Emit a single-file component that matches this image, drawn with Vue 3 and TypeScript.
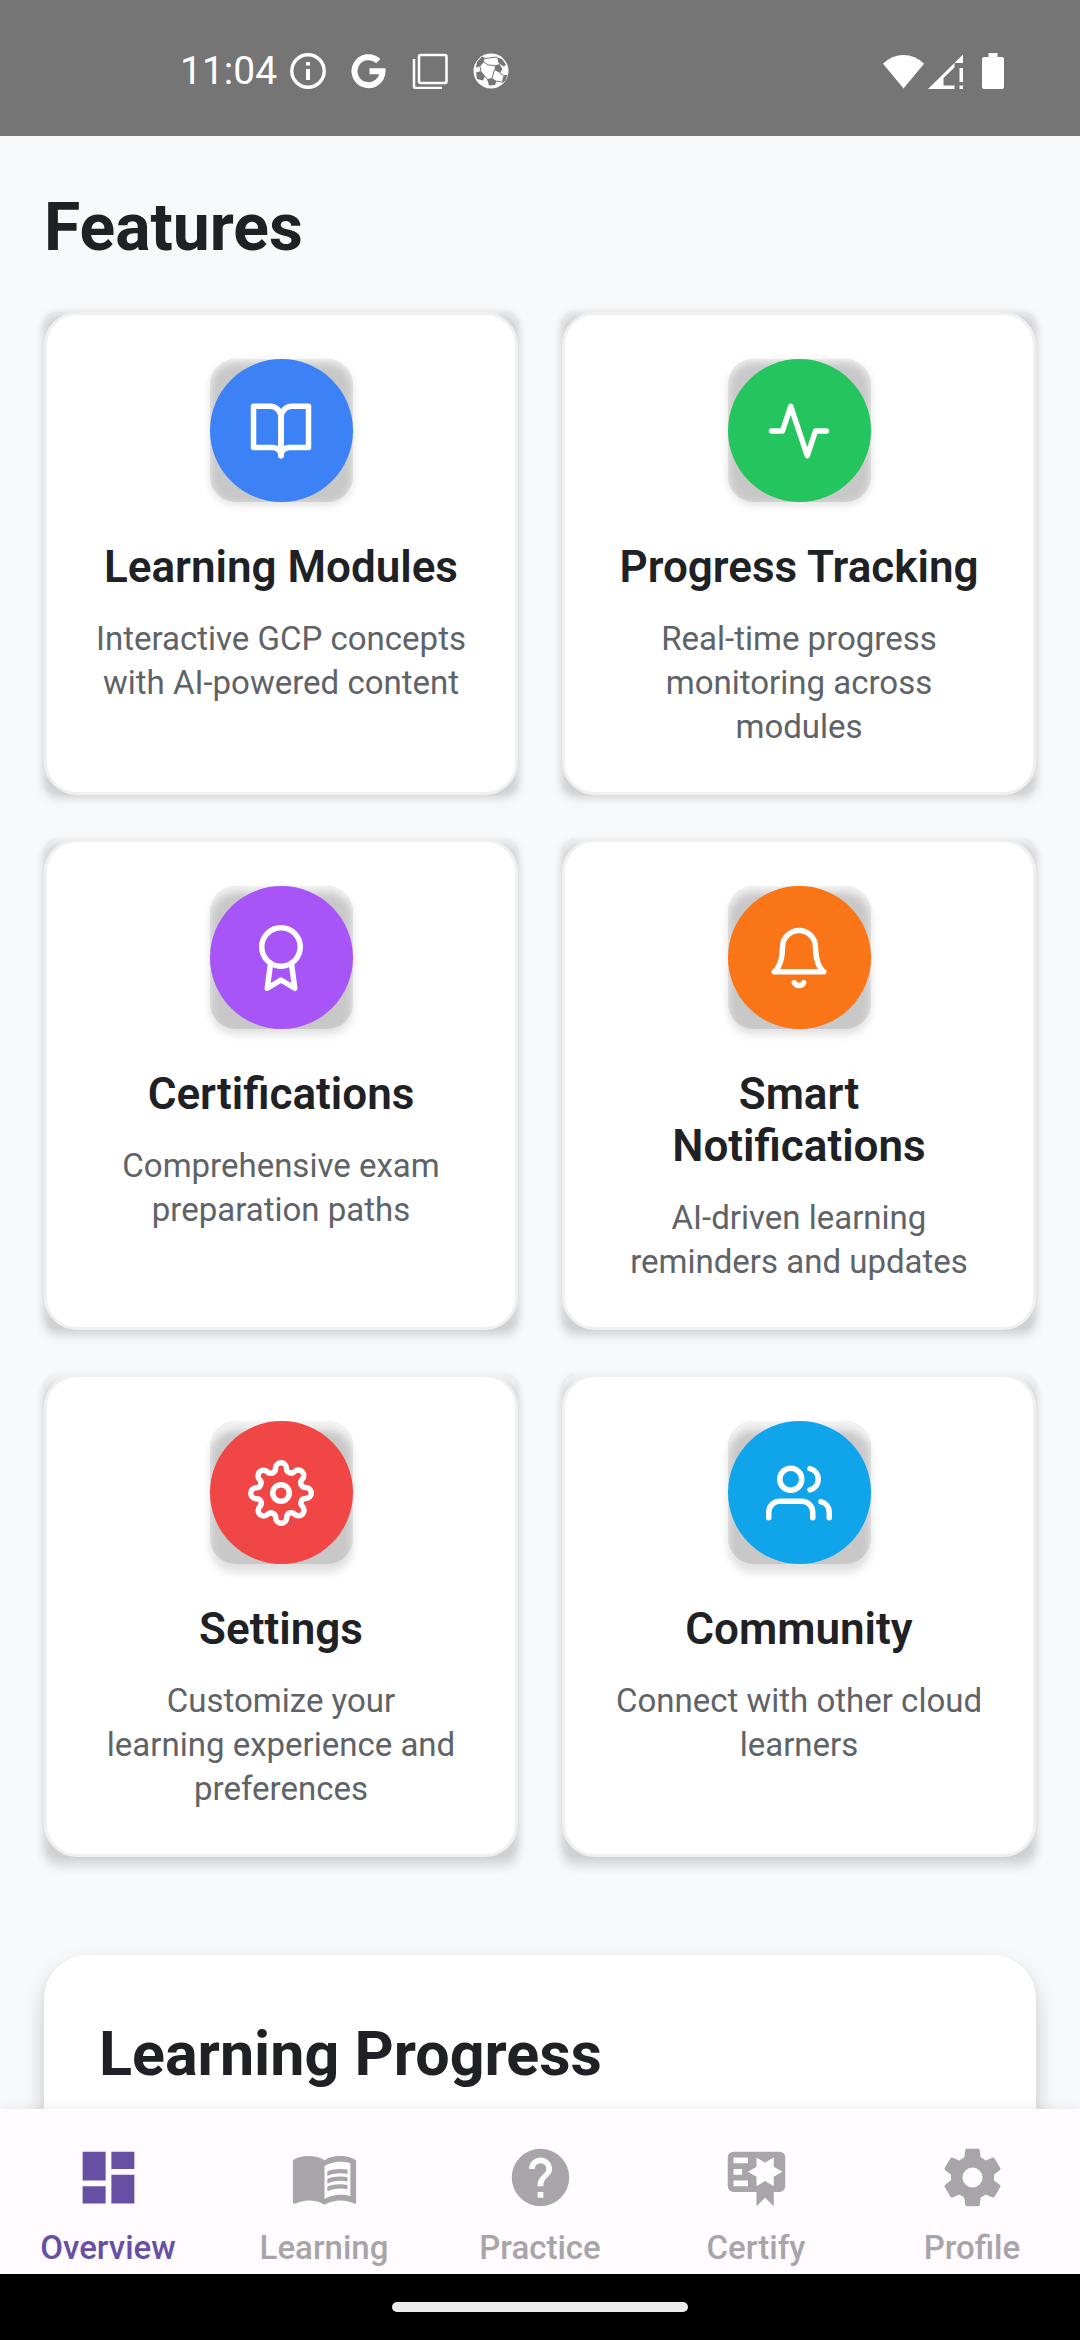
<script setup lang="ts">
interface Feature {
  title: string
  text: string
  color: string
  paths: string[]
  circle?: { cx: number; cy: number; r: number }
}

interface Tab {
  label: string
  path: string
}

const features: Feature[] = [
  {
    title: 'Learning Modules',
    text: 'Interactive GCP concepts with AI-powered content',
    color: '#3c82f6',
    paths: [
      'M2 3h6a4 4 0 0 1 4 4v14a3 3 0 0 0-3-3H2z',
      'M22 3h-6a4 4 0 0 0-4 4v14a3 3 0 0 1 3-3h7z',
    ],
  },
  {
    title: 'Progress Tracking',
    text: 'Real-time progress monitoring across modules',
    color: '#24c55f',
    paths: ['M22 12h-4l-3 9L9 3l-3 9H2'],
  },
  {
    title: 'Certifications',
    text: 'Comprehensive exam preparation paths',
    color: '#a855f7',
    paths: ['M8.21 13.89L7 23l5-3 5 3-1.21-9.12'],
    circle: { cx: 12, cy: 8, r: 7 },
  },
  {
    title: 'Smart Notifications',
    text: 'AI-driven learning reminders and updates',
    color: '#f97518',
    paths: [
      'M6 8a6 6 0 0 1 12 0c0 7 3 9 3 9H3s3-2 3-9',
      'M10.3 21a1.94 1.94 0 0 0 3.4 0',
    ],
  },
  {
    title: 'Settings',
    text: 'Customize your\nlearning experience and preferences',
    color: '#f04646',
    paths: [
      'M19.4 15a1.65 1.65 0 0 0 .33 1.82l.06.06a2 2 0 0 1 0 2.83 2 2 0 0 1-2.83 0l-.06-.06a1.65 1.65 0 0 0-1.82-.33 1.65 1.65 0 0 0-1 1.51V21a2 2 0 0 1-2 2 2 2 0 0 1-2-2v-.09A1.65 1.65 0 0 0 9 19.4a1.65 1.65 0 0 0-1.82.33l-.06.06a2 2 0 0 1-2.83 0 2 2 0 0 1 0-2.83l.06-.06a1.65 1.65 0 0 0 .33-1.82 1.65 1.65 0 0 0-1.51-1H3a2 2 0 0 1-2-2 2 2 0 0 1 2-2h.09A1.65 1.65 0 0 0 4.6 9a1.65 1.65 0 0 0-.33-1.82l-.06-.06a2 2 0 0 1 0-2.83 2 2 0 0 1 2.83 0l.06.06a1.65 1.65 0 0 0 1.82.33H9a1.65 1.65 0 0 0 1-1.51V3a2 2 0 0 1 2-2 2 2 0 0 1 2 2v.09a1.65 1.65 0 0 0 1 1.51 1.65 1.65 0 0 0 1.82-.33l.06-.06a2 2 0 0 1 2.83 0 2 2 0 0 1 0 2.83l-.06.06a1.65 1.65 0 0 0-.33 1.82V9a1.65 1.65 0 0 0 1.51 1H21a2 2 0 0 1 2 2 2 2 0 0 1-2 2h-.09a1.65 1.65 0 0 0-1.51 1z',
    ],
    circle: { cx: 12, cy: 12, r: 3 },
  },
  {
    title: 'Community',
    text: 'Connect with other cloud learners',
    color: '#10a5ea',
    paths: [
      'M17 21v-2a4 4 0 0 0-4-4H5a4 4 0 0 0-4 4v2',
      'M23 21v-2a4 4 0 0 0-3-3.87',
      'M16 3.13a4 4 0 0 1 0 7.75',
    ],
    circle: { cx: 9, cy: 7, r: 4 },
  },
]

const activeTab = 'Overview'

const tabs: Tab[] = [
  {
    label: 'Overview',
    path: 'M13 3v6h8V3M13 21h8V11h-8M3 21h8v-6H3M3 13h8V3H3',
  },
  {
    label: 'Learning',
    path: 'M21 5c-1.11-.35-2.33-.5-3.5-.5-1.95 0-4.05.4-5.5 1.5-1.45-1.1-3.55-1.5-5.5-1.5S2.45 4.9 1 6v14.65c0 .25.25.5.5.5.1 0 .15-.05.25-.05C3.1 20.45 5.05 20 6.5 20c1.95 0 4.05.4 5.5 1.5 1.35-.85 3.8-1.5 5.5-1.5 1.65 0 3.35.3 4.75 1.05.1.05.15.05.25.05.25 0 .5-.25.5-.5V6c-.6-.45-1.25-.75-2-1zm0 13.5c-1.1-.35-2.3-.5-3.5-.5-1.7 0-4.15.65-5.5 1.5V8c1.35-.85 3.8-1.5 5.5-1.5 1.2 0 2.4.15 3.5.5v11.5zM17.5 10.5c.88 0 1.73.09 2.5.26V9.24c-.79-.15-1.64-.24-2.5-.24-1.7 0-3.24.29-4.5.83v1.66c1.13-.64 2.7-.99 4.5-.99zM13 12.49v1.66c1.13-.64 2.7-.99 4.5-.99.88 0 1.73.09 2.5.26V11.9c-.79-.15-1.64-.24-2.5-.24-1.7 0-3.24.3-4.5.83zm4.5 1.84c-1.7 0-3.24.29-4.5.83v1.66c1.13-.64 2.7-.99 4.5-.99.88 0 1.73.09 2.5.26v-1.52c-.79-.16-1.64-.24-2.5-.24z',
  },
  {
    label: 'Practice',
    path: 'M15.07 11.25l-.9.92C13.45 12.89 13 13.5 13 15h-2v-.5c0-1.11.45-2.11 1.17-2.83l1.24-1.26C13.78 10.05 14 9.55 14 9a2 2 0 0 0-4 0H8a4 4 0 0 1 8 0c0 .88-.36 1.67-.93 2.25M13 19h-2v-2h2M12 2a10 10 0 1 0 0 20 10 10 0 0 0 0-20z',
  },
  {
    label: 'Certify',
    path: 'M4 3h16a2 2 0 0 1 2 2v10a2 2 0 0 1-2 2h-2v5l-3-3-3 3v-5H4a2 2 0 0 1-2-2V5a2 2 0 0 1 2-2zM4 5v2h5V5zM4 9v2h3V9zM4 13v2h5v-2zM12 5v3.3L9 10l3 1.7V15l3-1.8 3 1.8v-3.3l3-1.7-3-1.7V5l-3 1.8z',
  },
  {
    label: 'Profile',
    path: 'M12 15.5A3.5 3.5 0 0 1 8.5 12 3.5 3.5 0 0 1 12 8.5a3.5 3.5 0 0 1 3.5 3.5 3.5 3.5 0 0 1-3.5 3.5M19.43 12.97c.04-.32.07-.64.07-.97s-.03-.66-.07-1l2.11-1.63c.19-.15.24-.42.12-.64l-2-3.46c-.12-.22-.39-.31-.61-.22l-2.49 1c-.52-.39-1.06-.73-1.69-.98l-.37-2.65A.506.506 0 0 0 14 2h-4c-.25 0-.46.18-.5.42l-.37 2.65c-.63.25-1.17.59-1.69.98l-2.49-1c-.22-.09-.49 0-.61.22l-2 3.46c-.13.22-.07.49.12.64L4.57 11c-.04.34-.07.67-.07 1s.03.65.07.97l-2.11 1.66c-.19.15-.25.42-.12.64l2 3.46c.12.22.39.3.61.22l2.49-1.01c.52.4 1.06.74 1.69.99l.37 2.65c.04.24.25.42.5.42h4c.25 0 .46-.18.5-.42l.37-2.65c.63-.26 1.17-.59 1.69-.99l2.49 1.01c.22.08.49 0 .61-.22l2-3.46c.12-.22.07-.49-.12-.64z',
  },
]
</script>

<template>
  <div class="screen">
    <header class="status">
      <span class="time">11:04</span>
      <div class="notices">
        <svg viewBox="0 0 36 36" aria-hidden="true">
          <circle cx="18" cy="18" r="16.2" fill="none" stroke="#fff" stroke-width="3.4" />
          <path d="M16 9h4v3.5h-4zM16 16h4v11h-4z" fill="#fff" />
        </svg>
        <svg viewBox="0 0 36 36" aria-hidden="true">
          <path d="M27.3 8.2A14 14 0 1 0 31.5 18.3H18.5" fill="none" stroke="#fff" stroke-width="6" />
        </svg>
        <svg viewBox="0 0 36 36" aria-hidden="true">
          <rect x="7" y="2" width="27.5" height="28" rx="1.5" fill="none" stroke="#fff" stroke-width="2.5" />
          <path d="M2 6v27.5q0 1.5 1.5 1.5H30" fill="none" stroke="#fff" stroke-width="2.5" />
        </svg>
        <svg viewBox="0 0 36 36" aria-hidden="true">
          <circle cx="18" cy="18" r="17.5" fill="#fff" />
          <g fill="#757575">
            <path d="M4 9l5-5.5 2.5 1-.5 4.5-4 4.5-4 1z" />
            <path d="M24 4l5.5 2.5L33 12l-2.5 1.5-5-3.5z" />
            <path d="M22 12.5l4.5-1.5 3 5-2.5 4-5.5-3z" />
            <path d="M3 19.5l5-1.5 4 5-2 4.5-6-1.5z" />
            <path d="M14 26l5-1 4.5 3-1.5 4-6 .5z" />
            <path d="M30.5 22.5l4-1-2 6-4 3z" />
          </g>
          <path d="M11 9l4 3 7 .5M7 13.5l1 4.500M12 23l2 3M21.500 17l-2.500 8M11.500 5.500l4-.500L24 4M27 20l3.500 2.500M23.500 28l5 1" fill="none" stroke="#757575" stroke-width="1" />
        </svg>
      </div>
      <div class="signals">
        <svg class="wifi" viewBox="0 0 42 36" aria-hidden="true">
          <path d="M0 10.5Q9 1.5 21 1.5t21 9L21 36z" fill="#fff" />
        </svg>
        <svg class="cell" viewBox="0 0 36 36" aria-hidden="true">
          <path d="M0 36L35 1.5V10h-8.5v4.5L15.5 25v7.5h11V36zM31.5 15H35v14h-3.5zM31.5 32.5H35V36h-3.5z" fill="#fff" />
        </svg>
        <svg class="battery" viewBox="0 0 22 36" aria-hidden="true">
          <path d="M6.5 0h9v4H20q2 0 2 2v28q0 2-2 2H2q-2 0-2-2V6q0-2 2-2h4.5z" fill="#fff" />
        </svg>
      </div>
    </header>

    <main class="content">
      <h1>Features</h1>
      <section class="grid">
        <div v-for="f in features" :key="f.title" class="lift">
          <article class="card">
            <div class="badge-base">
              <div class="badge" :style="{ backgroundColor: f.color }">
                <svg viewBox="0 0 24 24" aria-hidden="true">
                  <circle v-if="f.circle" :cx="f.circle.cx" :cy="f.circle.cy" :r="f.circle.r" />
                  <path v-for="p in f.paths" :key="p" :d="p" />
                </svg>
              </div>
            </div>
            <h2>{{ f.title }}</h2>
            <p>{{ f.text }}</p>
          </article>
        </div>
      </section>
      <section class="progress">
        <h2>Learning Progress</h2>
      </section>
    </main>

    <nav class="tabs">
      <a
        v-for="t in tabs"
        :key="t.label"
        href="#"
        :class="{ active: t.label === activeTab }"
        :aria-current="t.label === activeTab ? 'page' : undefined"
      >
        <svg viewBox="0 0 24 24" aria-hidden="true"><path :d="t.path" /></svg>
        <span>{{ t.label }}</span>
      </a>
    </nav>
    <div class="gesture"><div class="pill"></div></div>
  </div>
</template>

<style>
body {
  margin: 0;
}
</style>

<style scoped>
.screen {
  display: flex;
  flex-direction: column;
  height: 100vh;
  overflow: hidden;
  background: #f8f9fb;
  color: #202124;
  font-family: Roboto, "Liberation Sans", sans-serif;
}

h1,
h2,
p {
  margin: 0;
}

.status {
  display: flex;
  flex: none;
  align-items: center;
  box-sizing: border-box;
  height: 136px;
  padding: 6px 76px 0 180px;
  background: #757575;
  color: #fff;
}

.time {
  font-size: 39px;
  line-height: 46px;
}

.notices {
  display: flex;
  gap: 25px;
  margin-left: 13px;
}

.status svg {
  display: block;
  width: 36px;
  height: 36px;
}

.signals {
  display: flex;
  margin-left: auto;
  gap: 4px;
}

.status .wifi {
  width: 41px;
}

.status .battery {
  width: 22px;
  margin-left: 14px;
}

.content {
  flex: 1;
  min-height: 0;
  overflow: hidden;
  padding: 53px 44px 0;
}

h1 {
  font-size: 66px;
  font-weight: 700;
  line-height: 77px;
  margin-bottom: 46px;
}

.grid {
  display: grid;
  grid-template-columns: 1fr 1fr;
  gap: 44px;
}

/* Each row of cards casts its shadow a little lower than the one above. */
.lift {
  --drop: 3px;
  display: flex;
  border-radius: 14px;
  background: #cfd0d2;
  box-shadow:
    inset 0 var(--drop) 8px #f1f2f4,
    0 var(--drop) 11px rgba(0, 0, 0, 0.14),
    0 0 6px rgba(0, 0, 0, 0.06);
}

.lift:nth-child(n + 3) {
  --drop: 6px;
}

.lift:nth-child(n + 5) {
  --drop: 9px;
}

.card {
  flex: 1;
  display: flex;
  flex-direction: column;
  align-items: center;
  padding: 44px 44px 43px;
  border: 3px solid #f0f0f0;
  border-radius: 33px;
  background: #fff;
  text-align: center;
}

.badge-base {
  margin-bottom: 39px;
  border-radius: 26px;
  background: #c8c8c8;
  box-shadow:
    inset 0 var(--drop) 9px #f4f4f4,
    0 var(--drop) 8px rgba(0, 0, 0, 0.12);
}

.badge {
  display: grid;
  place-items: center;
  width: 143px;
  height: 143px;
  border-radius: 50%;
}

.badge svg {
  width: 66px;
  height: 66px;
  overflow: visible;
  fill: none;
  stroke: #fff;
  stroke-width: 2;
  stroke-linecap: round;
  stroke-linejoin: round;
}

.card h2 {
  font-size: 44px;
  font-weight: 600;
  line-height: 52px;
  margin-bottom: 24px;
}

.card p {
  color: #5f6368;
  font-size: 33px;
  line-height: 44px;
  white-space: pre-line;
}

.progress {
  min-height: 400px;
  margin-top: 98px;
  padding: 61px 55px;
  border-radius: 44px;
  background: #fff;
  box-shadow: 0 11px 22px rgba(0, 0, 0, 0.2);
}

.progress h2 {
  font-size: 61px;
  font-weight: 700;
  line-height: 77px;
}

.tabs {
  display: flex;
  flex: none;
  height: 165px;
  background: #fffbff;
  box-shadow: 0 0 14px rgba(0, 0, 0, 0.08);
  z-index: 1;
}

.tabs a {
  flex: 1;
  display: flex;
  flex-direction: column;
  align-items: center;
  gap: 16px;
  padding-top: 34px;
  color: #a8a5a9;
  font-size: 33px;
  font-weight: 500;
  line-height: 40px;
  text-decoration: none;
}

.tabs a.active {
  color: #6750a4;
}

.tabs svg {
  display: block;
  width: 69px;
  height: 69px;
  fill: currentColor;
  fill-rule: evenodd;
}

.gesture {
  flex: none;
  display: grid;
  place-items: center;
  height: 66px;
  background: #000;
}

.pill {
  width: 296px;
  height: 10px;
  border-radius: 5px;
  background: #ebebeb;
}
</style>
